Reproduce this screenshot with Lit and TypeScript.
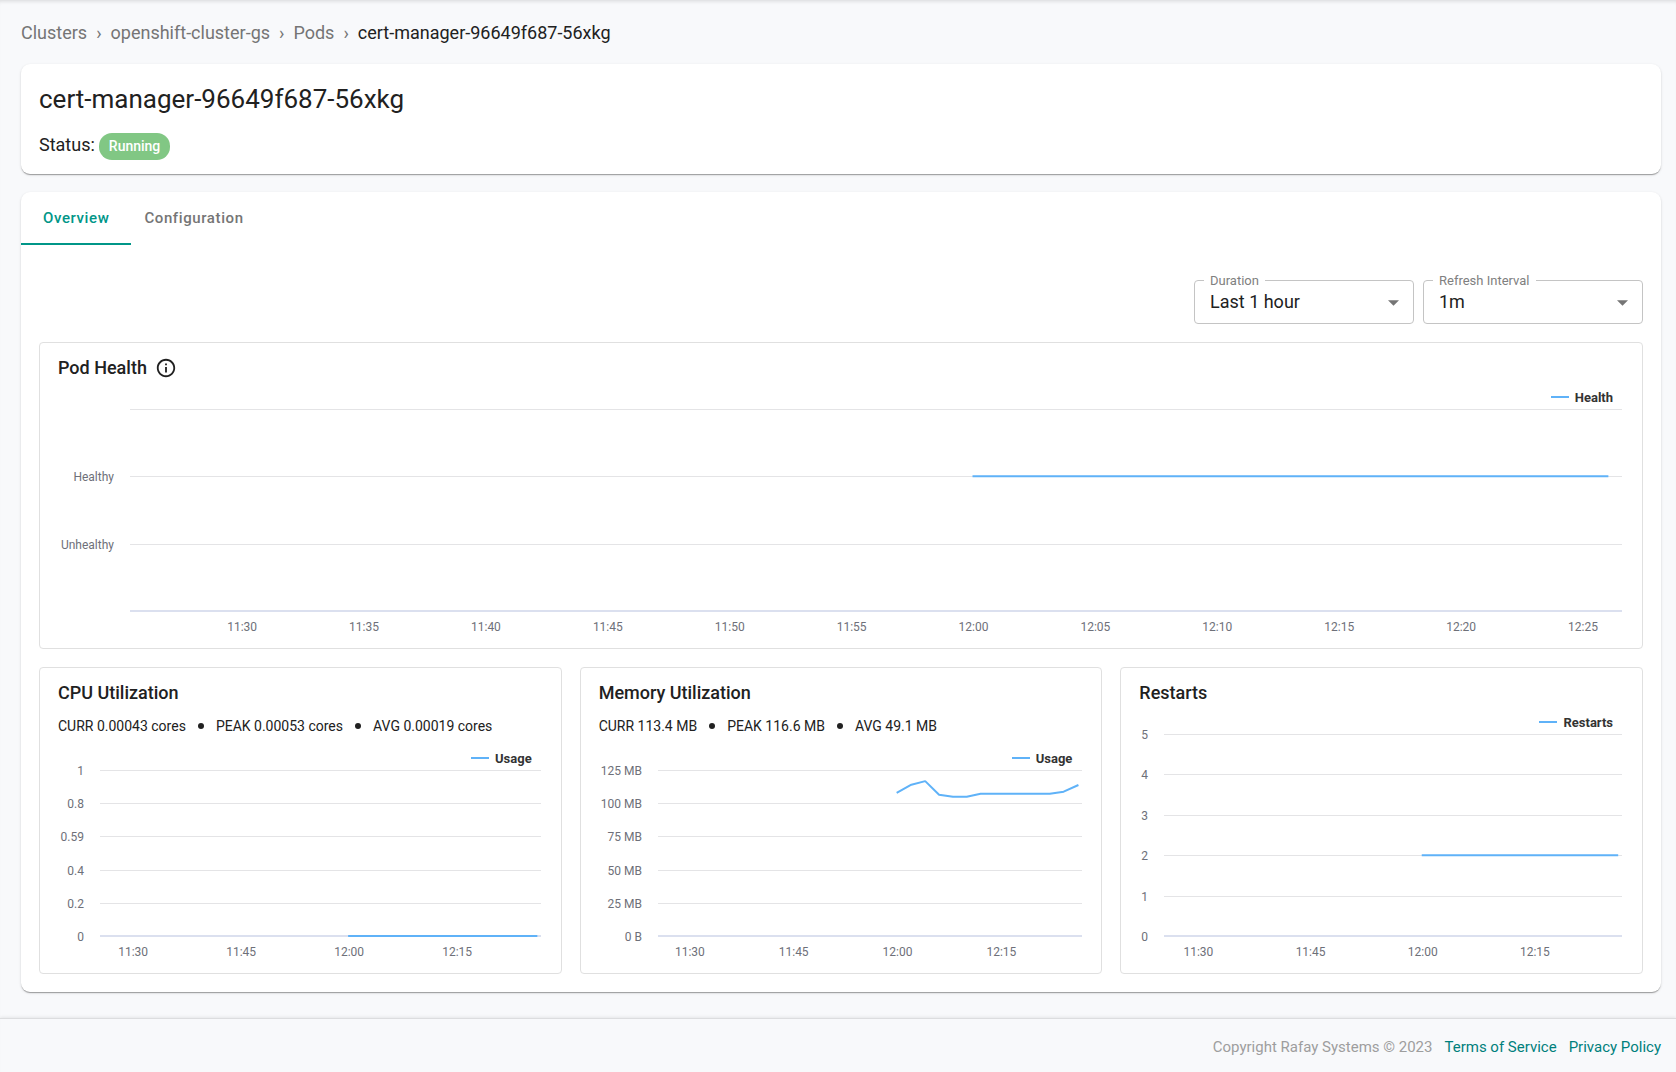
import { LitElement, html, svg, css, nothing } from "lit";
import { customElement, property, state } from "lit/decorators.js";

type Sample = { minute: number; value: number };
type Tick = { value: number; label: string };

const WINDOW_START = 25.4;
const WINDOW_MINUTES = 61.2;

const steady = (value: number): Sample[] => [
  { minute: 60, value },
  { minute: 86, value },
];

const memorySamples: Sample[] = [
  108.1, 113.9, 116.6, 106.4, 104.9, 104.9, 107.1, 107.1, 107.1, 107.1, 107.1, 107.1, 108.7, 113.4,
].map((value, i) => ({ minute: 60 + i * 2, value }));

@customElement("time-chart")
export class TimeChart extends LitElement {
  @property() series = "";
  @property({ type: Number }) max = 1;
  @property({ type: Number }) step = 15;
  @property({ type: Number }) plot = 202;
  @property({ attribute: false }) ticks: Tick[] = [];
  @property({ attribute: false }) samples: Sample[] = [];

  static styles = css`
    :host {
      display: block;
    }
    .legend {
      display: flex;
      align-items: center;
      justify-content: flex-end;
      gap: 6px;
      height: 24px;
      padding-right: 9px;
      font-size: 13px;
      font-weight: 700;
      color: #333;
    }
    .swatch {
      width: 18px;
      height: 2px;
      background: #5fb2f8;
    }
    .canvas {
      display: block;
      width: 100%;
      overflow: visible;
    }
    .grid {
      stroke: #e4e4e6;
      shape-rendering: crispEdges;
    }
    .axis {
      stroke: #dbe0ef;
      stroke-width: 2;
      shape-rendering: crispEdges;
    }
    .tick {
      font-size: 12px;
      fill: #6e7079;
    }
    .left {
      text-anchor: end;
    }
    .below {
      text-anchor: middle;
    }
    .line {
      fill: none;
      stroke: #5fb2f8;
      stroke-width: 2;
      stroke-linejoin: bevel;
      stroke-linecap: square;
      vector-effect: non-scaling-stroke;
    }
  `;

  private x(minute: number) {
    return ((minute - WINDOW_START) / WINDOW_MINUTES) * 100;
  }

  private y(value: number) {
    return Math.round(this.plot * (1 - value / this.max));
  }

  render() {
    const minutes: number[] = [];
    for (let m = 30; m <= 85; m += this.step) minutes.push(m);
    const clock = (m: number) =>
      `${11 + Math.floor(m / 60)}:${String(m % 60).padStart(2, "0")}`;
    const points = this.samples
      .map((s) => `${this.x(s.minute)},${this.plot * (1 - s.value / this.max)}`)
      .join(" ");
    return html`
      <div class="legend"><span class="swatch"></span>${this.series}</div>
      <svg class="canvas" height=${this.plot + 24} role="img" aria-label=${this.series}>
        ${this.ticks.map(
          (t) => svg`
            <line class=${t.value === 0 ? "axis" : "grid"} x1="0" x2="100%"
              y1=${this.y(t.value)} y2=${this.y(t.value)}></line>
            <text class="tick left" x="-16" y=${this.y(t.value) + 5}>${t.label}</text>`
        )}
        ${minutes.map(
          (m) => svg`<text class="tick below" x=${`${this.x(m)}%`} y=${this.plot + 20}>${clock(m)}</text>`
        )}
        <svg width="100%" height=${this.plot} viewBox=${`0 0 100 ${this.plot}`}
          preserveAspectRatio="none" overflow="visible">
          <polyline class="line" points=${points}></polyline>
        </svg>
      </svg>
    `;
  }
}

@customElement("select-field")
export class SelectField extends LitElement {
  @property() label = "";
  @property({ attribute: false }) options: string[] = [];

  static styles = css`
    .field {
      position: relative;
      width: 220px;
    }
    .label {
      position: absolute;
      top: -7px;
      left: 10px;
      padding: 0 6px;
      font-size: 13px;
      line-height: 16px;
      color: #808080;
      background: #fff;
    }
    .control {
      display: block;
      box-sizing: border-box;
      width: 100%;
      height: 44px;
      padding: 0 32px 2px 15px;
      border: 1px solid #c4c4c4;
      border-radius: 4px;
      background: transparent;
      font: inherit;
      font-size: 18px;
      color: #212121;
      appearance: none;
    }
    .arrow {
      position: absolute;
      top: 20px;
      right: 15px;
      fill: #757575;
      pointer-events: none;
    }
  `;

  render() {
    return html`
      <div class="field">
        <select class="control" id="control">
          ${this.options.map((o) => html`<option>${o}</option>`)}
        </select>
        <label class="label" for="control">${this.label}</label>
        <svg class="arrow" width="11" height="6" viewBox="0 0 10 5" aria-hidden="true">
          <path d="M0 0l5 5 5-5z"></path>
        </svg>
      </div>
    `;
  }
}

@customElement("app-root")
export class AppRoot extends LitElement {
  @state() private tab = "Overview";

  static styles = css`
    :host {
      display: block;
      min-height: 100vh;
      background: #f8f9fb;
      font-family: Roboto, "Liberation Sans", sans-serif;
      color: #212121;
    }
    .page {
      display: flex;
      flex-direction: column;
      min-height: 100vh;
      box-shadow: inset 0 4px 4px -3px rgba(0, 0, 0, 0.14);
    }
    .main {
      flex: 1;
      display: flex;
      flex-direction: column;
      gap: 18px;
      padding: 20px 15px 24px 21px;
    }
    .crumbs {
      display: flex;
      align-items: center;
      gap: 9px;
      height: 24px;
      padding-bottom: 2px;
      font-size: 18px;
      color: #757575;
    }
    .crumbs a {
      color: inherit;
      text-decoration: none;
    }
    .crumbs .here {
      color: #212121;
    }
    .card {
      border-radius: 9px;
      background: #fff;
      box-shadow: 0 2px 1px -1px rgba(0, 0, 0, 0.2), 0 1px 1px rgba(0, 0, 0, 0.14),
        0 1px 3px rgba(0, 0, 0, 0.12);
    }
    .summary {
      padding: 17px 18px 14px;
    }
    .name {
      margin: 0 0 16px;
      font-size: 26px;
      line-height: 36px;
      font-weight: 400;
    }
    .status {
      display: flex;
      align-items: center;
      gap: 4px;
      font-size: 18px;
      line-height: 27px;
    }
    .status-label {
      line-height: 24px;
      padding-bottom: 3px;
    }
    .chip {
      padding: 0 10px;
      border-radius: 13px;
      background: #81c784;
      color: #fff;
      font-size: 14px;
      font-weight: 500;
    }
    .tabs {
      display: flex;
    }
    .tab {
      height: 53px;
      padding: 0 13px;
      border: 0;
      border-bottom: 2px solid transparent;
      background: none;
      font: inherit;
      font-size: 15px;
      font-weight: 500;
      letter-spacing: 0.04em;
      color: #757575;
    }
    .tab.active {
      padding: 0 22px;
      border-color: #009688;
      color: #009688;
    }
    .body {
      display: flex;
      flex-direction: column;
      gap: 18px;
      padding: 35px 18px 18px;
    }
    .filters {
      display: flex;
      justify-content: flex-end;
      gap: 9px;
    }
    .trio {
      display: grid;
      grid-template-columns: repeat(3, minmax(0, 1fr));
      gap: 18px;
    }
    .panel {
      display: flex;
      flex-direction: column;
      box-sizing: border-box;
      min-height: 307px;
      padding: 13px 20px 12px 18px;
      border: 1px solid #e0e0e0;
      border-radius: 4px;
    }
    .heading {
      display: flex;
      align-items: center;
      gap: 8px;
      margin: 0;
      font-size: 18px;
      line-height: 24px;
      font-weight: 500;
    }
    .info {
      width: 22px;
      height: 22px;
      fill: #212121;
    }
    .stats {
      display: flex;
      align-items: center;
      gap: 12px;
      margin-top: 11px;
      font-size: 14px;
      line-height: 20px;
    }
    .dot {
      width: 6px;
      height: 6px;
      border-radius: 50%;
      background: #212121;
    }
    .chart {
      margin-top: 5px;
    }
    .stats + .chart {
      margin-top: 10px;
    }
    .health {
      padding-left: 72px;
    }
    .cpu {
      padding-left: 42px;
    }
    .memory {
      padding-left: 59px;
    }
    .restarts {
      padding-left: 25px;
    }
    .footer {
      display: flex;
      align-items: center;
      justify-content: flex-end;
      gap: 12px;
      height: 51px;
      padding: 2px 15px 0;
      border-top: 1px solid #dcdddf;
      box-shadow: 0 -1px 3px rgba(0, 0, 0, 0.08);
      font-size: 15px;
      color: #9e9e9e;
    }
    .footer a {
      color: #00807c;
      text-decoration: none;
    }
  `;

  private stats(items: string[]) {
    return html`<div class="stats">
      ${items.map((t, i) => html`${i ? html`<span class="dot"></span>` : nothing}<span>${t}</span>`)}
    </div>`;
  }

  render() {
    const scale = (values: number[], labels: string[]): Tick[] =>
      values.map((value, i) => ({ value, label: labels[i] }));
    return html`
      <div class="page">
        <main class="main">
          <nav class="crumbs" aria-label="Breadcrumb">
            <a href="#clusters">Clusters</a><span>›</span>
            <a href="#cluster">openshift-cluster-gs</a><span>›</span>
            <a href="#pods">Pods</a><span>›</span>
            <span class="here">cert-manager-96649f687-56xkg</span>
          </nav>
          <section class="card summary">
            <h1 class="name">cert-manager-96649f687-56xkg</h1>
            <div class="status">
              <span class="status-label">Status:</span><span class="chip">Running</span>
            </div>
          </section>
          <section class="card">
            <div class="tabs" role="tablist">
              ${["Overview", "Configuration"].map(
                (t) => html`<button
                  class="tab ${this.tab === t ? "active" : ""}"
                  role="tab"
                  aria-selected=${this.tab === t}
                  @click=${() => (this.tab = t)}
                >${t}</button>`
              )}
            </div>
            <div class="body">
              <div class="filters">
                <select-field label="Duration" .options=${["Last 1 hour"]}></select-field>
                <select-field label="Refresh Interval" .options=${["1m"]}></select-field>
              </div>
              <article class="panel">
                <h2 class="heading">
                  Pod Health
                  <svg class="info" viewBox="0 0 24 24" aria-hidden="true">
                    <path d="M11 7h2v2h-2zm0 4h2v6h-2zm1-9C6.480 2 2 6.480 2 12s4.480 10 10 10 10-4.480 10-10S17.520 2 12 2zm0 18c-4.410 0-8-3.590-8-8s3.590-8 8-8 8 3.590 8 8-3.590 8-8 8z"></path>
                  </svg>
                </h2>
                <time-chart
                  class="chart health"
                  series="Health"
                  step="5"
                  max="3"
                  .ticks=${scale([3, 2, 1, 0], ["", "Healthy", "Unhealthy", ""])}
                  .samples=${steady(2)}
                ></time-chart>
              </article>
              <div class="trio">
                <article class="panel">
                  <h2 class="heading">CPU Utilization</h2>
                  ${this.stats(["CURR 0.00043 cores", "PEAK 0.00053 cores", "AVG 0.00019 cores"])}
                  <time-chart
                    class="chart cpu"
                    series="Usage"
                    plot="166"
                    max="1"
                    .ticks=${scale([1, 0.8, 0.6, 0.4, 0.2, 0], ["1", "0.8", "0.59", "0.4", "0.2", "0"])}
                    .samples=${steady(0.00043)}
                  ></time-chart>
                </article>
                <article class="panel">
                  <h2 class="heading">Memory Utilization</h2>
                  ${this.stats(["CURR 113.4 MB", "PEAK 116.6 MB", "AVG 49.1 MB"])}
                  <time-chart
                    class="chart memory"
                    series="Usage"
                    plot="166"
                    max="125"
                    .ticks=${scale(
                      [125, 100, 75, 50, 25, 0],
                      ["125 MB", "100 MB", "75 MB", "50 MB", "25 MB", "0 B"]
                    )}
                    .samples=${memorySamples}
                  ></time-chart>
                </article>
                <article class="panel">
                  <h2 class="heading">Restarts</h2>
                  <time-chart
                    class="chart restarts"
                    series="Restarts"
                    max="5"
                    .ticks=${scale([5, 4, 3, 2, 1, 0], ["5", "4", "3", "2", "1", "0"])}
                    .samples=${steady(2)}
                  ></time-chart>
                </article>
              </div>
            </div>
          </section>
        </main>
        <footer class="footer">
          <span>Copyright Rafay Systems © 2023</span>
          <a href="#terms">Terms of Service</a>
          <a href="#privacy">Privacy Policy</a>
        </footer>
      </div>
    `;
  }
}
